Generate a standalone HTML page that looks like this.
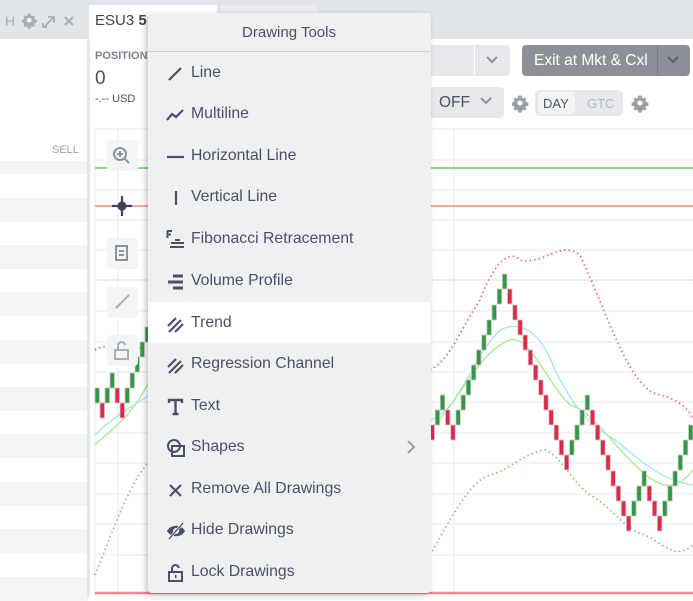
<!DOCTYPE html>
<html><head><meta charset="utf-8"><style>
*{box-sizing:border-box;margin:0;padding:0}
body{width:693px;height:597px;overflow:hidden;background:#fff;font-family:"Liberation Sans",sans-serif;position:relative;color:#4b5066}
.abs{position:absolute}
.row{position:absolute;left:0;width:88px;height:23.5px}
.mi{position:absolute;left:0;width:282px;height:41px;font-size:15.8px;color:#4a5068}
.mi span{position:absolute;left:43px;top:12px}
.mi svg{position:absolute;left:18px;top:12px}
</style></head><body>
<svg width="0" height="0" style="position:absolute"><defs><g id="gear"><path d="M8 0.5l1.6 0.3 0.4 2 1.3 0.7 1.9-0.8 1.1 1.2-0.8 1.9 0.7 1.3 2 0.4 0.3 1.6-0.3 1.6-2 0.4-0.7 1.3 0.8 1.9-1.1 1.2-1.9-0.8-1.3 0.7-0.4 2-1.6 0.3-1.6-0.3-0.4-2-1.3-0.7-1.9 0.8-1.1-1.2 0.8-1.9-0.7-1.3-2-0.4-0.3-1.6 0.3-1.6 2-0.4 0.7-1.3-0.8-1.9 1.1-1.2 1.9 0.8 1.3-0.7 0.4-2z"/><circle cx="8" cy="8" r="2.6" fill="#fff"/></g></defs></svg>
<!-- top bar -->
<div class="abs" style="left:0;top:0;width:693px;height:39px;background:#e1e4e9"></div>
<div class="abs" style="left:5px;top:13px;font-size:14px;color:#a9adb5">H</div>
<svg class="abs" style="left:22px;top:13px" width="58" height="16" viewBox="0 0 58 16"><use href="#gear" fill="#a9adb5" transform="scale(0.9)"/><path d="M23 13 L31 5 M26 4h6v6 M21 10v4h4" stroke="#a9adb5" stroke-width="1.8" fill="none"/><path d="M43 4 L51 12 M51 4 L43 12" stroke="#a9adb5" stroke-width="2"/></svg>
<div class="abs" style="left:89px;top:5px;width:128px;height:35px;background:#fff"></div>
<div class="abs" style="left:221px;top:5px;width:96px;height:35px;background:#eaecef"></div>
<div class="abs" style="left:95px;top:12px;font-size:15px;color:#3e4458">ESU3 <b>5</b></div>
<!-- left panel -->
<div class="abs" style="left:0;top:39px;width:88px;height:558px;background:#fff"></div>
<div class="abs" style="left:52px;top:144px;font-size:11px;color:#9aa0a8">SELL</div>
<div class="row" style="top:161px;background:#f3f4f6;height:13px"></div>
<div class="row" style="top:198px;background:#f3f4f6"></div>
<div class="row" style="top:245px;background:#f3f4f6"></div>
<div class="row" style="top:292px;background:#f3f4f6"></div>
<div class="row" style="top:340px;background:#f3f4f6"></div>
<div class="row" style="top:387px;background:#f3f4f6"></div>
<div class="row" style="top:434px;background:#f3f4f6"></div>
<div class="row" style="top:482px;background:#f3f4f6"></div>
<div class="row" style="top:529px;background:#f3f4f6"></div>
<div class="row" style="top:577px;background:#f3f4f6"></div>
<div class="abs" style="left:87px;top:39px;width:3px;height:558px;background:#e3e6ea"></div>
<!-- position -->
<div class="abs" style="left:95px;top:50px;font-size:11px;color:#7c828c;font-weight:bold">POSITION</div>
<div class="abs" style="left:95px;top:68px;font-size:19px;color:#4b5066">0</div>
<div class="abs" style="left:95px;top:93px;font-size:11px;color:#4b5066">-.-- USD</div>
<!-- right controls -->
<div class="abs" style="left:420px;top:45px;width:90px;height:31px;background:#e6e8eb;border-radius:4px"></div>
<div class="abs" style="left:474px;top:45px;width:1px;height:31px;background:#fff"></div>
<svg class="abs" style="left:485px;top:55px" width="14" height="10"><path d="M2 2 L7 7 L12 2" stroke="#8b909a" stroke-width="2" fill="none"/></svg>
<div class="abs" style="left:522px;top:45px;width:168px;height:31px;background:#8d9097;border-radius:4px"></div>
<div class="abs" style="left:657px;top:45px;width:1px;height:31px;background:#777b82"></div>
<div class="abs" style="left:534px;top:52px;font-size:15.5px;color:#fff">Exit at Mkt &amp; Cxl</div>
<svg class="abs" style="left:666px;top:55px" width="14" height="10"><path d="M2 2 L7 7 L12 2" stroke="#5d6168" stroke-width="2" fill="none"/></svg>
<div class="abs" style="left:420px;top:87px;width:84px;height:31px;background:#e6e8eb;border-radius:4px"></div>
<div class="abs" style="left:439px;top:94px;font-size:15.5px;color:#4b5066">OFF</div>
<svg class="abs" style="left:479px;top:96px" width="14" height="10"><path d="M2 2 L7 7 L12 2" stroke="#8b909a" stroke-width="2" fill="none"/></svg>
<svg class="abs" style="left:512px;top:95px" width="140" height="18"><use href="#gear" fill="#9a9ea6"/><use href="#gear" fill="#9a9ea6" x="120"/></svg>
<div class="abs" style="left:535px;top:90px;width:88px;height:26px;background:#e6e8eb;border-radius:5px"></div>
<div class="abs" style="left:538px;top:92px;width:37px;height:22px;background:#f3f4f6;border-radius:4px"></div>
<div class="abs" style="left:543px;top:96px;font-size:13px;color:#4b5066">DAY</div>
<div class="abs" style="left:587px;top:96px;font-size:13px;color:#b4b8bf">GTC</div>
<!-- chart -->
<svg class="abs" style="left:0;top:0" width="693" height="597">
<g stroke="#eff0f2" stroke-width="1.5">
<line x1="95" y1="129" x2="693" y2="129"/><line x1="95" y1="160" x2="693" y2="160"/><line x1="95" y1="190" x2="693" y2="190"/><line x1="95" y1="220" x2="693" y2="220"/><line x1="95" y1="250" x2="693" y2="250"/><line x1="95" y1="311" x2="693" y2="311"/><line x1="95" y1="342" x2="693" y2="342"/><line x1="95" y1="372" x2="693" y2="372"/><line x1="95" y1="402" x2="693" y2="402"/><line x1="95" y1="433" x2="693" y2="433"/><line x1="95" y1="463" x2="693" y2="463"/><line x1="95" y1="494" x2="693" y2="494"/><line x1="95" y1="524" x2="693" y2="524"/><line x1="95" y1="555" x2="693" y2="555"/>
<line x1="95" y1="129" x2="95" y2="597"/><line x1="118" y1="129" x2="118" y2="597"/><line x1="454" y1="129" x2="454" y2="597"/>
</g>
<line x1="95" y1="280" x2="693" y2="280" stroke="#cfd2d6" stroke-dasharray="3 1"/>
<line x1="95" y1="168" x2="693" y2="168" stroke="#8fd68a" stroke-width="2"/>
<line x1="95" y1="206" x2="693" y2="206" stroke="#f4a996" stroke-width="2"/>
<line x1="95" y1="593" x2="693" y2="593" stroke="#f08896" stroke-width="2.5"/>
<g fill="none" stroke-width="1.3">
<path d="M95 435 C110 420 125 410 150 395 M430 420 C460 410 470 360 500 330 C520 320 540 330 555 370 C575 410 590 425 615 440 C640 460 660 480 693 485" stroke="#9ee5f5"/>
<path d="M95 445 C110 430 130 420 150 380 M430 430 C460 400 480 350 510 340 C530 335 545 380 570 405 C590 410 610 440 630 460 C650 480 670 500 693 470" stroke="#a6ea8f"/>
<path d="M95 350 C110 340 125 355 150 345 M430 370 C450 360 460 330 480 300 C495 260 510 250 520 260 C545 265 560 240 580 255 C610 320 630 390 660 395 C680 400 690 410 693 420" stroke="#f06a7e" stroke-dasharray="1.5 3" stroke-width="1.8"/>
<path d="M95 575 C110 540 125 490 150 460 M430 555 C450 520 470 480 490 475 C510 470 520 455 545 450 C560 455 570 480 590 495 C610 505 625 530 645 535 C665 545 675 560 693 545" stroke="#7fd06f" stroke-dasharray="1.5 3" stroke-width="1.8"/>
</g>
<g stroke="#d6c3c8" stroke-width="0.8">
<g fill="#2f9a44">
<rect x="95" y="388" width="4.5" height="15"/><rect x="105" y="388" width="4.5" height="15"/><rect x="110" y="373" width="4.5" height="15"/><rect x="125" y="388" width="4.5" height="15"/><rect x="130" y="373" width="4.5" height="15"/><rect x="135" y="357" width="4.5" height="15"/><rect x="140" y="342" width="4.5" height="15"/><rect x="145" y="327" width="4.5" height="15"/>
<rect x="435.2" y="410" width="4.5" height="15"/><rect x="440.3" y="395" width="4.5" height="15"/><rect x="455.9" y="410" width="4.5" height="15"/><rect x="461" y="395" width="4.5" height="15"/><rect x="466.2" y="380" width="4.5" height="15"/><rect x="471.4" y="365" width="4.5" height="15"/><rect x="476.5" y="350" width="4.5" height="15"/><rect x="481.7" y="335" width="4.5" height="15"/><rect x="486.9" y="320" width="4.5" height="15"/><rect x="492" y="305" width="4.5" height="15"/><rect x="497.2" y="289" width="4.5" height="15"/><rect x="502.4" y="274" width="4.5" height="15"/>
<rect x="569.6" y="440" width="4.5" height="15"/><rect x="574.8" y="425" width="4.5" height="15"/><rect x="579.9" y="410" width="4.5" height="15"/><rect x="585.1" y="395" width="4.5" height="15"/>
<rect x="631.6" y="501" width="4.5" height="15"/><rect x="636.8" y="486" width="4.5" height="15"/><rect x="641.9" y="471" width="4.5" height="15"/>
<rect x="662.6" y="501" width="4.5" height="15"/><rect x="667.8" y="486" width="4.5" height="15"/><rect x="672.9" y="471" width="4.5" height="15"/><rect x="678.1" y="455" width="4.5" height="15"/><rect x="683.3" y="440" width="4.5" height="15"/><rect x="688.5" y="425" width="4.5" height="15"/>
</g>
<g fill="#dc2b49">
<rect x="100" y="403" width="4.5" height="15"/><rect x="115" y="388" width="4.5" height="15"/><rect x="120" y="403" width="4.5" height="15"/>
<rect x="430" y="425" width="4.5" height="15"/><rect x="445.5" y="410" width="4.5" height="15"/><rect x="450.7" y="425" width="4.5" height="15"/>
<rect x="507.5" y="289" width="4.5" height="15"/><rect x="512.7" y="305" width="4.5" height="15"/><rect x="517.9" y="320" width="4.5" height="15"/><rect x="523" y="335" width="4.5" height="15"/><rect x="528.2" y="350" width="4.5" height="15"/><rect x="533.4" y="365" width="4.5" height="15"/><rect x="538.6" y="380" width="4.5" height="15"/><rect x="543.7" y="395" width="4.5" height="15"/><rect x="548.9" y="410" width="4.5" height="15"/><rect x="554.1" y="425" width="4.5" height="15"/><rect x="559.2" y="440" width="4.5" height="15"/><rect x="564.4" y="455" width="4.5" height="15"/>
<rect x="590.3" y="410" width="4.5" height="15"/><rect x="595.4" y="425" width="4.5" height="15"/><rect x="600.6" y="440" width="4.5" height="15"/><rect x="605.8" y="455" width="4.5" height="15"/><rect x="610.9" y="471" width="4.5" height="15"/><rect x="616.1" y="486" width="4.5" height="15"/><rect x="621.3" y="501" width="4.5" height="15"/><rect x="626.4" y="516" width="4.5" height="15"/>
<rect x="647.1" y="486" width="4.5" height="15"/><rect x="652.3" y="501" width="4.5" height="15"/><rect x="657.4" y="516" width="4.5" height="15"/>
</g></g>
<!-- chart tool buttons -->
<g fill="#f3f4f6"><rect x="107" y="140" width="31" height="31" rx="4"/><rect x="107" y="238" width="31" height="31" rx="4"/><rect x="107" y="287" width="31" height="31" rx="4"/><rect x="107" y="335" width="31" height="31" rx="4"/></g>
<g fill="none" stroke="#8e929b" stroke-width="2"><circle cx="120" cy="154" r="6"/><path d="M124.5 158.5 L129 163 M117 154h6 M120 151v6"/><rect x="116" y="246" width="11" height="14"/><path d="M119 251h5 M119 255h5"/><path d="M116 308 L129 295" stroke="#a9adb5"/><rect x="115" y="350" width="13" height="9" stroke="#a9adb5"/><path d="M118 350v-4a3.5 3.5 0 0 1 7 -1" stroke="#a9adb5"/></g>
<g stroke="#3e4458" stroke-width="2.2" fill="none"><circle cx="122" cy="206" r="3.5" fill="#3e4458"/><path d="M122 196v7 M122 209v7 M112 206h7 M125 206h7"/></g>
</svg>
<!-- menu -->
<div class="abs" style="left:148px;top:13px;width:283px;height:580px;background:#eff0f2;border-radius:4px;box-shadow:-2px 2px 6px rgba(0,0,0,0.25)">
<div class="abs" style="left:0;top:11px;width:282px;text-align:center;font-size:15px;color:#4a5068">Drawing Tools</div>
<div class="abs" style="left:0;top:38px;width:282px;height:1px;background:#cdd0d5"></div>
<div class="mi" style="top:39px"><svg width="20" height="20"><path d="M3 16 L15 4" stroke="#4a5068" stroke-width="2.2"/></svg><span>Line</span></div>
<div class="mi" style="top:80px"><svg width="20" height="20"><path d="M1 15 L6 9 L10 12 L17 5" stroke="#4a5068" stroke-width="2.2" fill="none"/></svg><span>Multiline</span></div>
<div class="mi" style="top:122px"><svg width="20" height="20"><path d="M1 10 H18" stroke="#4a5068" stroke-width="2.2"/></svg><span>Horizontal Line</span></div>
<div class="mi" style="top:163px"><svg width="20" height="20"><path d="M10 3 V17" stroke="#4a5068" stroke-width="2.2"/></svg><span>Vertical Line</span></div>
<div class="mi" style="top:205px"><svg width="20" height="20"><path d="M1 1h5 M1.5 1v7 M1 4.5h4 M9 10h5 M5 13h13 M4 17h14" stroke="#4a5068" stroke-width="2" fill="none"/></svg><span>Fibonacci Retracement</span></div>
<div class="mi" style="top:247px"><svg width="20" height="20"><path d="M7 4h10 M2 10h15 M7 16h10" stroke="#4a5068" stroke-width="3"/></svg><span>Volume Profile</span></div>
<div class="mi" style="top:289px;background:#fff"><svg width="20" height="20"><path d="M2 12 L10 4 M3 18 L15 6 M9 18 L17 10" stroke="#4a5068" stroke-width="2.2"/></svg><span>Trend</span></div>
<div class="mi" style="top:330px"><svg width="20" height="20"><path d="M2 12 L10 4 M3 18 L15 6 M9 18 L17 10" stroke="#4a5068" stroke-width="2.2"/></svg><span>Regression Channel</span></div>
<div class="mi" style="top:372px"><svg width="20" height="20"><path d="M3 6V3h13v3 M9.5 3v14 M6.5 17h6" stroke="#4a5068" stroke-width="2.4" fill="none"/></svg><span>Text</span></div>
<div class="mi" style="top:413px"><svg width="20" height="20"><circle cx="8" cy="8" r="6" stroke="#4a5068" stroke-width="2" fill="none"/><rect x="6" y="8" width="12" height="10" stroke="#4a5068" stroke-width="2" fill="none"/></svg><span>Shapes</span><svg style="left:258px;top:14px" width="10" height="14"><path d="M2 1 L8 7 L2 13" stroke="#9a9ea6" stroke-width="2" fill="none"/></svg></div>
<div class="mi" style="top:455px"><svg width="20" height="20"><path d="M4 5 L15 16 M15 5 L4 16" stroke="#4a5068" stroke-width="2.2"/></svg><span>Remove All Drawings</span></div>
<div class="mi" style="top:496px"><svg width="20" height="20"><path d="M1 10 C5 3 15 3 19 10 C15 17 5 17 1 10Z" fill="#4a5068"/><circle cx="10" cy="10" r="3" fill="#eff0f2"/><path d="M3 18 L17 2" stroke="#eff0f2" stroke-width="2.5"/><path d="M3 18 L17 2" stroke="#4a5068" stroke-width="1.2"/></svg><span>Hide Drawings</span></div>
<div class="mi" style="top:538px"><svg width="20" height="20"><rect x="3" y="9" width="13" height="9" stroke="#4a5068" stroke-width="2" fill="none"/><path d="M6 9V6a3.5 3.5 0 0 1 7 -1" stroke="#4a5068" stroke-width="2" fill="none"/><rect x="9" y="12" width="1.5" height="3" fill="#4a5068"/></svg><span>Lock Drawings</span></div>
</div>
</body></html>
